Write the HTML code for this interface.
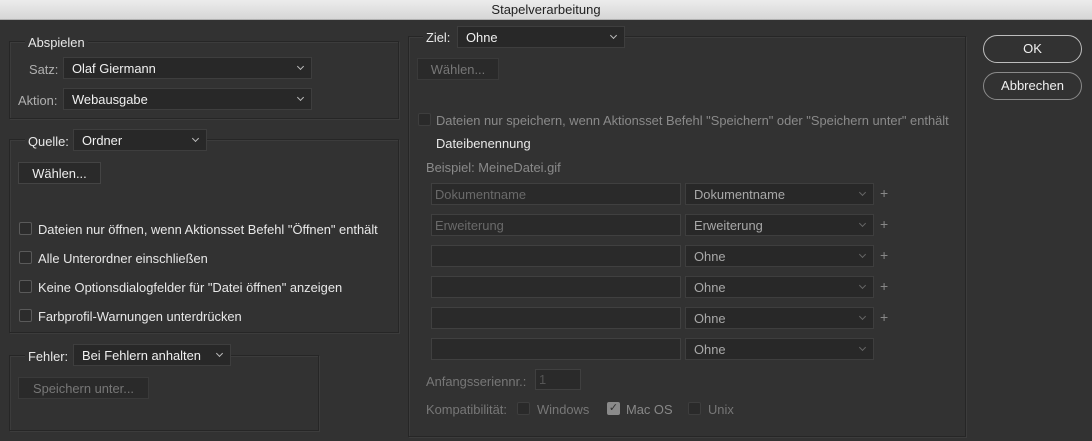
<!DOCTYPE html>
<html><head><meta charset="utf-8"><style>
*{box-sizing:border-box;margin:0;padding:0}
body{width:1092px;height:441px;background:#323232;font-family:"Liberation Sans",sans-serif;font-size:12.9px;color:#e8e8e8;position:relative;overflow:hidden}
.a{position:absolute;white-space:nowrap}
.title{left:0;top:0;width:1092px;height:20px;background:linear-gradient(#ececec,#d6d6d6);border-bottom:1px solid #b0b0b0;color:#222;text-align:center;line-height:20px;font-size:13px}
.grp{position:absolute;border:1px solid #262626;box-shadow:1px 1px 0 #3c3c3c inset,1px 1px 0 #3c3c3c}
.lbl{background:#323232;padding:0 3px}
.dd{position:absolute;height:22px;background:#282828;border:1px solid #3e3e3e;padding-left:8px;line-height:21px;color:#f0f0f0}
.dd:after{content:"";position:absolute;right:8px;top:6px;width:4px;height:4px;border-right:1px solid #bbb;border-bottom:1px solid #bbb;transform:rotate(45deg)}
.dd.dis{color:#a8a8a8}.dd.dis:after{border-color:#666}
.btn{position:absolute;height:22px;background:#2a2a2a;border:1px solid #444;text-align:center;line-height:21px;color:#eee}
.btn.dis{color:#777;border-color:#3a3a3a}
.tf{position:absolute;height:22px;width:250px;background:#2a2a2a;border:1px solid #404040;color:#6a6a6a;line-height:21px;padding-left:3px}
.cb{position:absolute;width:13px;height:13px;border:1px solid #5a5a5a;border-radius:2px;background:#2c2c2c}
.cb.dis{border-color:#3e3e3e;background:#2a2a2a}
.grey{color:#8a8a8a}
.plus{position:absolute;color:#888;font-size:14px}
.rb{position:absolute;left:983px;width:99px;height:28px;border:1.5px solid #bdbdbd;border-radius:14px;text-align:center;line-height:26px;color:#f0f0f0;font-size:13px}
</style></head><body>
<div class="a title">Stapelverarbeitung</div>

<div class="grp" style="left:9px;top:41px;width:390px;height:78px"></div>
<div class="a lbl" style="left:25px;top:35px">Abspielen</div>
<div class="a grey" style="left:29px;top:62px;color:#b0b0b0">Satz:</div>
<div class="dd" style="left:63px;top:57px;width:249px">Olaf Giermann</div>
<div class="a" style="left:18px;top:93px;color:#b0b0b0">Aktion:</div>
<div class="dd" style="left:63px;top:88px;width:249px">Webausgabe</div>

<div class="grp" style="left:9px;top:139px;width:390px;height:194px"></div>
<div class="a lbl" style="left:25px;top:134px;width:48px;height:14px"></div>
<div class="a" style="left:28px;top:134px">Quelle:</div>
<div class="dd" style="left:73px;top:129px;width:134px">Ordner</div>
<div class="btn" style="left:18px;top:162px;width:83px">Wählen...</div>
<div class="cb" style="left:19px;top:222px"></div><div class="a" style="left:38px;top:222px">Dateien nur öffnen, wenn Aktionsset Befehl "Öffnen" enthält</div>
<div class="cb" style="left:19px;top:251px"></div><div class="a" style="left:38px;top:251px">Alle Unterordner einschließen</div>
<div class="cb" style="left:19px;top:280px"></div><div class="a" style="left:38px;top:280px">Keine Optionsdialogfelder für "Datei öffnen" anzeigen</div>
<div class="cb" style="left:19px;top:309px"></div><div class="a" style="left:38px;top:309px">Farbprofil-Warnungen unterdrücken</div>

<div class="grp" style="left:9px;top:355px;width:310px;height:76px"></div>
<div class="a lbl" style="left:25px;top:349px;width:48px;height:14px"></div>
<div class="a" style="left:28px;top:349px">Fehler:</div>
<div class="dd" style="left:73px;top:344px;width:158px">Bei Fehlern anhalten</div>
<div class="btn dis" style="left:18px;top:377px;width:131px">Speichern unter...</div>

<div class="grp" style="left:408px;top:36px;width:558px;height:401px"></div>
<div class="a lbl" style="left:423px;top:30px;width:34px;height:14px"></div>
<div class="a" style="left:426px;top:30px">Ziel:</div>
<div class="dd" style="left:457px;top:26px;width:168px">Ohne</div>
<div class="btn dis" style="left:417px;top:58px;width:82px">Wählen...</div>
<div class="cb dis" style="left:418px;top:113px"></div><div class="a grey" style="left:436px;top:113px">Dateien nur speichern, wenn Aktionsset Befehl "Speichern" oder "Speichern unter" enthält</div>
<div class="a" style="left:436px;top:136px">Dateibenennung</div>
<div class="a grey" style="left:426px;top:160px">Beispiel: MeineDatei.gif</div>

<div class="tf" style="left:431px;top:183px">Dokumentname</div><div class="dd dis" style="left:685px;top:183px;width:189px">Dokumentname</div><div class="plus" style="left:880px;top:185px">+</div>
<div class="tf" style="left:431px;top:214px">Erweiterung</div><div class="dd dis" style="left:685px;top:214px;width:189px">Erweiterung</div><div class="plus" style="left:880px;top:216px">+</div>
<div class="tf" style="left:431px;top:245px"></div><div class="dd dis" style="left:685px;top:245px;width:189px">Ohne</div><div class="plus" style="left:880px;top:247px">+</div>
<div class="tf" style="left:431px;top:276px"></div><div class="dd dis" style="left:685px;top:276px;width:189px">Ohne</div><div class="plus" style="left:880px;top:278px">+</div>
<div class="tf" style="left:431px;top:307px"></div><div class="dd dis" style="left:685px;top:307px;width:189px">Ohne</div><div class="plus" style="left:880px;top:309px">+</div>
<div class="tf" style="left:431px;top:338px"></div><div class="dd dis" style="left:685px;top:338px;width:189px">Ohne</div>

<div class="a grey" style="left:426px;top:374px;color:#777">Anfangsseriennr.:</div>
<div class="tf" style="left:535px;top:369px;width:46px;height:21px;color:#555;line-height:19px">1</div>
<div class="a grey" style="left:426px;top:402px;color:#777">Kompatibilität:</div>
<div class="cb dis" style="left:517px;top:402px"></div><div class="a grey" style="left:537px;top:402px;color:#777">Windows</div>
<div class="cb" style="left:607px;top:402px;background:#8a8a8a;border-color:#8a8a8a;color:#333;font-size:11px;line-height:11px;text-align:center">✓</div><div class="a grey" style="left:626px;top:402px;color:#888">Mac OS</div>
<div class="cb dis" style="left:688px;top:402px"></div><div class="a grey" style="left:708px;top:402px;color:#777">Unix</div>

<div class="rb" style="top:35px">OK</div>
<div class="rb" style="top:72px;border-color:#8a8a8a">Abbrechen</div>
</body></html>
